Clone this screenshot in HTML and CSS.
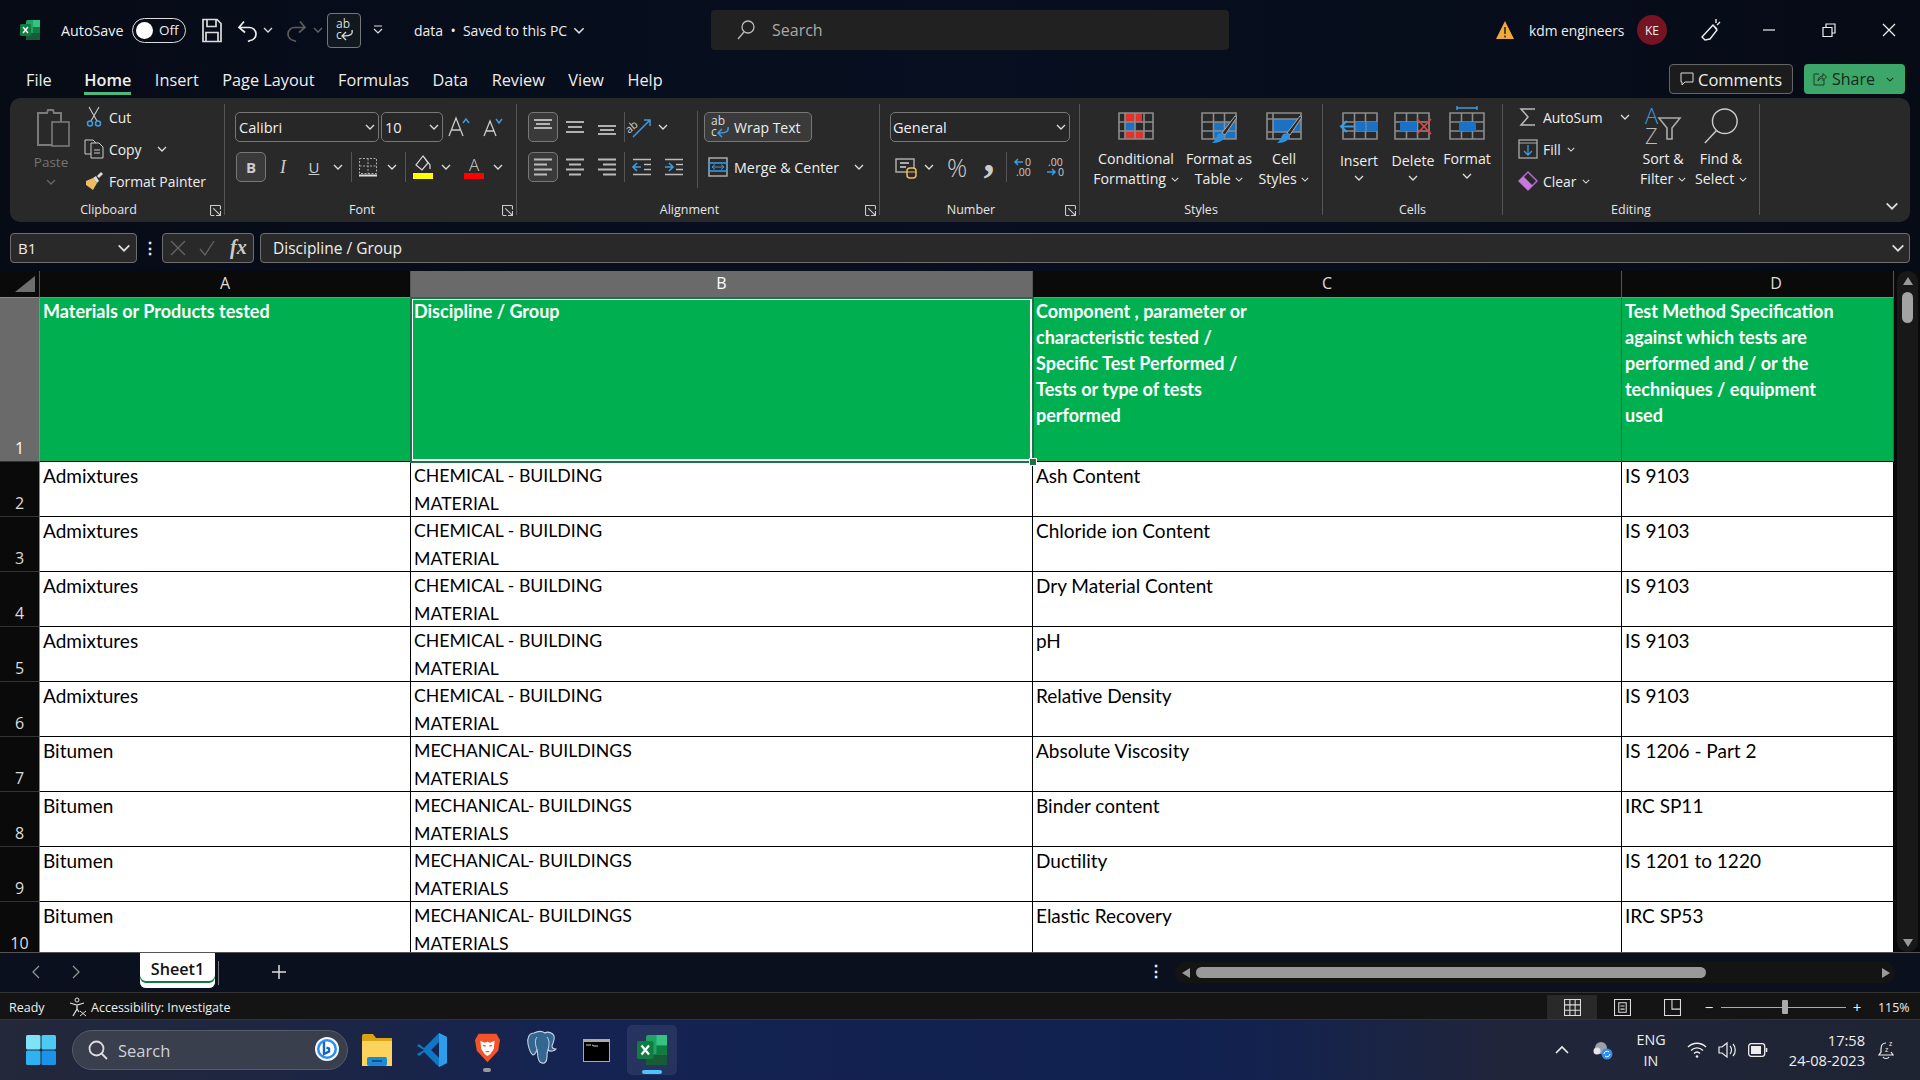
FILE: index.html
```html
<!DOCTYPE html>
<html lang="en">
<head>
<meta charset="utf-8">
<title>data - Excel</title>
<link rel="stylesheet" href="styles.css">
</head>
<body>
<svg class="defs" aria-hidden="true">
  <symbol id="chev" viewBox="0 0 10 6"><path d="M1 1l4 4 4-4" fill="none" stroke="currentColor" stroke-width="1.3"/></symbol>
  <symbol id="launch" viewBox="0 0 10 10"><path d="M.5 9V.5H9M.5 9.5H4M9.5 .5V4M3 3l6 6M9.5 5.5v4h-4" fill="none" stroke="#ccc"/></symbol>
  <symbol id="excel" viewBox="0 0 20 20"><rect x="6" width="14" height="20" rx="1.5" fill="#21a366"/><rect x="13" width="7" height="7" fill="#33c481"/><rect x="6" y="13" width="14" height="7" fill="#185c37"/><rect x="13" y="7" width="7" height="6" fill="#107c41"/><rect y="4" width="11" height="12" rx="1.2" fill="#107c41"/><path d="M3 7l5 6M8 7l-5 6" stroke="#fff" stroke-width="1.5"/></symbol>
  <symbol id="grid" viewBox="0 0 36 28"><path d="M1 1h34v26H1zM12.500 1v26M23.500 1v26M1 10h34M1 19h34" fill="none" stroke="#8c8c8c" stroke-width="1.6"/></symbol>
  <symbol id="al-top" viewBox="0 0 22 22"><path d="M2 4h18M4 8h14M2 12h18" stroke="#ddd" stroke-width="1.4"/></symbol>
  <symbol id="al-mid" viewBox="0 0 22 22"><path d="M2 6h18M4 11h14M2 16h18" stroke="#ddd" stroke-width="1.4"/></symbol>
  <symbol id="al-bot" viewBox="0 0 22 22"><path d="M2 10h18M4 14h14M2 18h18" stroke="#ddd" stroke-width="1.4"/></symbol>
  <symbol id="h-left" viewBox="0 0 22 22"><path d="M2 3.500h18M2 8.500h13M2 13.500h18M2 18.500h13" stroke="#bbb" stroke-width="1.8"/></symbol>
  <symbol id="h-center" viewBox="0 0 22 22"><path d="M2 3.500h18M5 8.500h12M2 13.500h18M5 18.500h12" stroke="#bbb" stroke-width="1.8"/></symbol>
  <symbol id="h-right" viewBox="0 0 22 22"><path d="M2 3.500h18M7 8.500h13M2 13.500h18M7 18.500h13" stroke="#bbb" stroke-width="1.8"/></symbol>
  <symbol id="brush" viewBox="0 0 36 28"><path d="M24 20L36 2l-2-1-13 17z" fill="#292929" stroke="#aaa"/><path d="M17 19c5-2 8 0 6 4-2 4-7 5-12 5 3-2 4-6 6-9z" fill="#2f8fdc"/></symbol>
</svg>

<header class="titlebar">
  <svg class="logo"><use href="#excel"/></svg>
  <span class="autosave">AutoSave</span>
  <span class="toggle"><i class="knob"></i><b class="off">Off</b></span>
  <svg class="qa save" viewBox="0 0 20 24"><path d="M1 1h14l4 4v18H1zM5 1v7h9V1M4 23v-9h12v9" fill="none" stroke="#ddd" stroke-width="1.7"/></svg>
  <svg class="qa undo" viewBox="0 0 20 24"><path d="M2 9h10a6.500 6.500 0 0 1 1 13l-2 1M7 3L2 9l6 5" fill="none" stroke="#eee" stroke-width="1.7"/></svg>
  <svg class="tiny c1"><use href="#chev"/></svg>
  <svg class="qa redo" viewBox="0 0 20 24"><path d="M18 9H8a6.500 6.500 0 0 0-1 13l2 1M13 3l5 6-6 5" fill="none" stroke="#5c5c5c" stroke-width="1.7"/></svg>
  <svg class="tiny c2 dim"><use href="#chev"/></svg>
  <span class="abbox"><svg class="wrapic white" viewBox="0 0 18 22"><text x="1" y="9" class="abt">ab</text><text x="1" y="20" class="abt">c</text><path d="M17 11c1 4-1 6-9 6M11 13l-4 4 4 4" fill="none" stroke="currentColor" stroke-width="1.300"/></svg></span>
  <svg class="more" viewBox="0 0 10 10"><path d="M1 1h8M1 4l4 4 4-4" fill="none" stroke="#ddd" stroke-width="1.2"/></svg>
  <span class="docname">data &nbsp;•&nbsp; Saved to this PC</span>
  <svg class="tiny docchev"><use href="#chev"/></svg>
  <div class="searchbox">
    <svg class="searchic" viewBox="0 0 18 20"><circle cx="11" cy="7" r="6" fill="none" stroke="#bbb" stroke-width="1.3"/><path d="M7 12l-6 7" stroke="#bbb" stroke-width="1.3"/></svg>
    <span>Search</span>
  </div>
  <div class="title-right">
    <svg class="warn" viewBox="0 0 20 20"><path d="M10 1l9 18H1z" fill="#f2a93b"/><path d="M10 7v7M10 15.500v2" stroke="#222" stroke-width="1.5"/></svg>
    <span class="user">kdm engineers</span>
    <span class="avatar">KE</span>
    <svg class="pen" viewBox="0 0 22 24"><path d="M14 7L3 19l3 3 5-1 7-9zM15 8l3 3M17 1v4M21 4l-3 3" fill="none" stroke="#eee" stroke-width="1.4"/></svg>
    <svg class="win win-min" viewBox="0 0 14 14"><path d="M1 7h12" stroke="#eee" stroke-width="1.2"/></svg>
    <svg class="win win-max" viewBox="0 0 14 14"><path d="M1 4.500h9v9H1zM4 4V1h9v9h-3" fill="none" stroke="#eee" stroke-width="1.2"/></svg>
    <svg class="win win-x" viewBox="0 0 14 14"><path d="M1 1l12 12M13 1L1 13" stroke="#eee" stroke-width="1.3"/></svg>
  </div>
</header>

<nav class="tabs">
  <div class="tablist">
    <span>File</span><span class="active">Home</span><span>Insert</span><span>Page Layout</span><span>Formulas</span><span>Data</span><span>Review</span><span>View</span><span>Help</span>
  </div>
  <div class="tabactions">
    <span class="comments"><svg class="cmt" viewBox="0 0 14 14"><path d="M1 1h12v9H5l-3 3v-3H1z" fill="none" stroke="#ddd"/></svg>Comments</span>
    <span class="share"><svg class="shr" viewBox="0 0 14 14"><path d="M6 2H1v11h10V8M5 9c0-3 2-5 5-5V1.500L13.500 5 10 8.500V6C8 6 6 7 5 9z" fill="none" stroke="#1c3a28"/></svg>Share<svg class="tiny sharechev"><use href="#chev"/></svg></span>
  </div>
</nav>

<section class="ribbon">
  <div class="group g-clip">
    <div class="body">
      <div class="paste">
        <svg class="pasteic" viewBox="0 0 34 40"><path d="M2 5h9l1-3h5l1 3h7v32H2z" fill="none" stroke="#7a7a7a" stroke-width="2"/><rect x="16" y="14" width="17" height="24" fill="#292929" stroke="#7a7a7a" stroke-width="1.600"/></svg>
        <span class="pastelabel">Paste</span>
        <svg class="tiny dim"><use href="#chev"/></svg>
      </div>
      <div class="stack">
        <div class="sm"><span class="smic"><svg class="s20" viewBox="0 0 20 20"><path d="M5 0l8 14M15 0L7 14" stroke="#ccc" stroke-width="1.100"/><circle cx="6" cy="16.500" r="2.500" fill="none" stroke="#3f9be0" stroke-width="1.500"/><circle cx="14" cy="16.500" r="2.500" fill="none" stroke="#3f9be0" stroke-width="1.500"/></svg></span><span>Cut</span></div>
        <div class="sm"><span class="smic"><svg class="s20" viewBox="0 0 20 20"><path d="M7 15H1V1h8l3 3" fill="none" stroke="#ccc"/><path d="M7 4h8l4 4v11H7zM10 11h6M10 14h6" fill="none" stroke="#ccc"/></svg></span><span>Copy</span><svg class="tiny copychev"><use href="#chev"/></svg></div>
        <div class="sm"><span class="smic"><svg class="s20" viewBox="0 0 20 20"><path d="M2 10l7-3 4 5-4 7-7-5z" fill="#eebc62"/><path d="M9 7l4 5 2-2-3-5zM13 5l4-4 2 2-4 4" fill="#ddd"/></svg></span><span>Format Painter</span></div>
      </div>
    </div>
    <div class="labelrow"><span class="label">Clipboard</span><svg class="launch"><use href="#launch"/></svg></div>
  </div>

  <div class="group g-font">
    <div class="body col">
      <div class="row">
        <span class="combo w144"><span class="caret-text">Calibri</span><svg class="tiny"><use href="#chev"/></svg></span>
        <span class="combo w62"><span class="caret-text">10</span><svg class="tiny"><use href="#chev"/></svg></span>
        <span class="t w32 bigA"><svg class="s24" viewBox="0 0 24 24"><path d="M2 21L9 3l7 18M5 15h8" fill="none" stroke="#ccc" stroke-width="1.300"/><path d="M16 8l3-4 3 4" fill="none" stroke="#3f9be0" stroke-width="1.500"/></svg></span>
        <span class="t w34 midA"><svg class="s24" viewBox="0 0 24 24"><path d="M4 21l6-15 6 15M6.500 16h7" fill="none" stroke="#ccc" stroke-width="1.300"/><path d="M16 4l3 4 3-4" fill="none" stroke="#3f9be0" stroke-width="1.500"/></svg></span>
      </div>
      <div class="row nudged">
        <span class="t w30 toggled boldb">B</span>
        <span class="t w34 italic">I</span>
        <span class="t w28 under">U</span>
        <span class="t w20"><svg class="tiny"><use href="#chev"/></svg></span>
        <span class="t w6"><i class="vsep"></i></span>
        <span class="t w28"><svg class="s20" viewBox="0 0 20 20"><path d="M1.500 1.500h17v15h-17zM10 1.500v15M1.500 9h17" fill="none" stroke="#aaa" stroke-dasharray="2 1.500"/><path d="M1 18.500h18" stroke="#ddd" stroke-width="2"/></svg></span>
        <span class="t w20"><svg class="tiny"><use href="#chev"/></svg></span>
        <span class="t w6"><i class="vsep"></i></span>
        <span class="t w30"><svg class="s20b" viewBox="0 0 20 24"><path d="M10 1l-7 9 6 5 6-7zM11 2l6 8v4" fill="none" stroke="#ddd" stroke-width="1.200"/><rect y="18" width="20" height="6" fill="#ff0"/></svg></span>
        <span class="t w16"><svg class="tiny"><use href="#chev"/></svg></span>
        <span class="t w40 colorA">A<i class="redbar"></i></span>
        <span class="t w8"><svg class="tiny"><use href="#chev"/></svg></span>
      </div>
    </div>
    <div class="labelrow"><span class="label">Font</span><svg class="launch"><use href="#launch"/></svg></div>
  </div>

  <div class="group g-align">
    <div class="body">
      <div class="col w164 nudged">
        <div class="row">
          <span class="t w30 toggled"><svg class="s22"><use href="#al-top"/></svg></span>
          <span class="t w34"><svg class="s22"><use href="#al-mid"/></svg></span>
          <span class="t w30"><svg class="s22"><use href="#al-bot"/></svg></span>
          <span class="t w4"><i class="vsep"></i></span>
          <span class="t w28"><svg class="s22" viewBox="0 0 22 22"><path d="M4 21L20 5M15 4h6v6" fill="none" stroke="#3f9be0" stroke-width="1.500"/><text x="-3" y="14" class="abrot" transform="rotate(-40 4 12)">ab</text></svg></span>
          <span class="t w18"><svg class="tiny"><use href="#chev"/></svg></span>
        </div>
        <div class="row">
          <span class="t w30 toggled"><svg class="s22"><use href="#h-left"/></svg></span>
          <span class="t w34"><svg class="s22"><use href="#h-center"/></svg></span>
          <span class="t w30"><svg class="s22"><use href="#h-right"/></svg></span>
          <span class="t w4"><i class="vsep"></i></span>
          <span class="t w32"><svg class="s22" viewBox="0 0 22 22"><path d="M2 3.500h18M13 8.500h7M13 13.500h7M2 18.500h18" stroke="#bbb" stroke-width="1.700"/><path d="M10 11H2M6 7l-4 4 4 4" fill="none" stroke="#3f9be0" stroke-width="1.700"/></svg></span>
          <span class="t w32"><svg class="s22" viewBox="0 0 22 22"><path d="M2 3.500h18M13 8.500h7M13 13.500h7M2 18.500h18" stroke="#bbb" stroke-width="1.700"/><path d="M2 11h8M6 7l4 4-4 4" fill="none" stroke="#3f9be0" stroke-width="1.700"/></svg></span>
        </div>
      </div>
      <i class="vsep tall"></i>
      <div class="col">
        <div class="row"><span class="wrapbtn"><svg class="wrapic blu" viewBox="0 0 18 22"><text x="0" y="9" class="abt">ab</text><text x="0" y="20" class="abt">c</text><path d="M17 11c1 4-1 6-9 6M11 13l-4 4 4 4" fill="none" stroke="currentColor" stroke-width="1.500"/></svg>Wrap Text</span></div>
        <div class="row merge">
          <svg class="s20m" viewBox="0 0 20 20"><rect x="1" y="1" width="18" height="18" fill="none" stroke="#aaa" stroke-width="1.500"/><path d="M1 6h18v8H1z" fill="none" stroke="#3f9be0" stroke-width="1.500"/><path d="M4 10h12M7 7.500L4 10l3 2.500M13 7.500l3 2.500-3 2.500" fill="none" stroke="#3f9be0"/></svg>
          <span class="mergetext">Merge &amp; Center</span>
          <svg class="tiny"><use href="#chev"/></svg>
        </div>
      </div>
    </div>
    <div class="labelrow"><span class="label">Alignment</span><svg class="launch"><use href="#launch"/></svg></div>
  </div>

  <div class="group g-num">
    <div class="body col">
      <div class="row"><span class="combo w180"><span class="caret-text">General</span><svg class="tiny"><use href="#chev"/></svg></span></div>
      <div class="row nudged">
        <span class="t w30"><svg class="s22" viewBox="0 0 22 22"><rect x="1" y="3" width="18" height="13" fill="none" stroke="#aaa" stroke-width="1.500"/><path d="M5 7h9M5 11h6" stroke="#aaa" stroke-width="2"/><rect x="12" y="12" width="9" height="10" rx="3" fill="#292929" stroke="#eebc62" stroke-width="1.500"/><path d="M12 16h9" stroke="#eebc62"/></svg></span>
        <span class="t w16"><svg class="tiny"><use href="#chev"/></svg></span>
        <span class="t w40 pct">%</span>
        <span class="t w24 comma">,</span>
        <span class="t w10"><i class="vsep"></i></span>
        <span class="t w26"><svg class="s22" viewBox="0 0 22 22"><path d="M10 6H2M5 3L2 6l3 3" fill="none" stroke="#3f9be0" stroke-width="1.500"/><text x="12" y="10" class="dec">0</text><text x="3" y="20" class="dec">.00</text></svg></span>
        <span class="t w38"><svg class="s22" viewBox="0 0 22 22"><text x="3" y="10" class="dec">.00</text><path d="M2 16h8M7 13l3 3-3 3" fill="none" stroke="#3f9be0" stroke-width="1.500"/><text x="13" y="20" class="dec">0</text></svg></span>
      </div>
    </div>
    <div class="labelrow"><span class="label">Number</span><svg class="launch"><use href="#launch"/></svg></div>
  </div>

  <div class="group g-styles">
    <div class="body">
      <div class="large w92">
        <svg class="lgic" viewBox="0 0 36 28"><rect x="7" y="1" width="17" height="9" fill="#e3312c"/><rect x="7" y="10" width="10" height="9" fill="#1b72c4"/><rect x="7" y="19" width="19" height="8" fill="#e3312c"/><path d="M1 1h34v26H1zM7 1v26M17 1v26M26 1v26M1 10h34M1 19h34" fill="none" stroke="#8c8c8c" stroke-width="1.600"/></svg>
        <span class="lgtext">Conditional<br>Formatting <svg class="tiny inl"><use href="#chev"/></svg></span>
      </div>
      <div class="large w74">
        <svg class="lgic" viewBox="0 0 36 28"><rect x="12" y="10" width="23" height="17" fill="#1b72c4"/><use href="#grid" width="36" height="28"/><use href="#brush" width="36" height="28" y="3"/></svg>
        <span class="lgtext">Format as<br>Table <svg class="tiny inl"><use href="#chev"/></svg></span>
      </div>
      <div class="large w56">
        <svg class="lgic" viewBox="0 0 36 28"><rect x="7" y="7" width="28" height="13" fill="#1b72c4"/><path d="M1 1h34v26H1zM7 1v26M1 7h34M1 20h34M23 20v7" fill="none" stroke="#8c8c8c" stroke-width="1.600"/><use href="#brush" width="36" height="28" y="3"/></svg>
        <span class="lgtext">Cell<br>Styles <svg class="tiny inl"><use href="#chev"/></svg></span>
      </div>
    </div>
    <div class="labelrow"><span class="label">Styles</span></div>
  </div>

  <div class="group g-cells">
    <div class="body">
      <div class="large w54 low">
        <svg class="lgic wide" viewBox="0 0 38 28"><use href="#grid" x="2" width="36" height="28"/><rect x="15" y="10" width="23" height="9" fill="#1b72c4"/><path d="M15 10v9M26 10v9" stroke="#8c8c8c"/><path d="M14 14.500H2M7 9l-6 5.500L7 20" fill="none" stroke="#3f9be0" stroke-width="2"/></svg>
        <span class="lgtext">Insert<br><svg class="tiny"><use href="#chev"/></svg></span>
      </div>
      <div class="large w54 low">
        <svg class="lgic wide" viewBox="0 0 38 28"><use href="#grid" width="36" height="28"/><rect x="6" y="10" width="17" height="9" fill="#1b72c4"/><path d="M23 7l14 15M37 7L23 22" stroke="#e3443c" stroke-width="1.800"/></svg>
        <span class="lgtext">Delete<br><svg class="tiny"><use href="#chev"/></svg></span>
      </div>
      <div class="large w54">
        <svg class="lgic bar" viewBox="0 0 36 34"><path d="M8 2h20M8 0v4M28 0v4" stroke="#3f9be0" stroke-width="1.400"/><use href="#grid" y="6" width="36" height="28"/><rect x="10" y="16" width="17" height="9" fill="#1b72c4"/></svg>
        <span class="lgtext">Format<br><svg class="tiny"><use href="#chev"/></svg></span>
      </div>
    </div>
    <div class="labelrow"><span class="label">Cells</span></div>
  </div>

  <div class="group g-edit">
    <div class="body">
      <div class="stack w124">
        <div class="sm"><span class="smic"><svg class="s20" viewBox="0 0 20 20"><path d="M17 2H3l7 8-7 8h14" fill="none" stroke="#bbb" stroke-width="1.500"/></svg></span><span>AutoSum</span><svg class="tiny autochev"><use href="#chev"/></svg></div>
        <div class="sm"><span class="smic"><svg class="s20" viewBox="0 0 20 20"><rect x="1" y="1" width="18" height="18" fill="none" stroke="#aaa" stroke-width="1.300"/><path d="M1 4h18" stroke="#aaa"/><path d="M10 6v10M6 12l4 4 4-4" fill="none" stroke="#3f9be0" stroke-width="1.300"/></svg></span><span>Fill</span><svg class="tiny fillchev"><use href="#chev"/></svg></div>
        <div class="sm"><span class="smic"><svg class="s20" viewBox="0 0 20 20"><path d="M10 1l9 9-9 9-9-9z" fill="none" stroke="#b566d0" stroke-width="1.500"/><path d="M5.500 5.500l9 9-4.500 4.500-9-9z" fill="#c47ada"/></svg></span><span>Clear</span><svg class="tiny fillchev"><use href="#chev"/></svg></div>
      </div>
      <div class="large w48">
        <svg class="lgic find" viewBox="0 0 36 36"><text x="0" y="16" class="az blu-fill">A</text><text x="0" y="36" class="az">Z</text><path d="M14 10h21l-8 10v11h-5V20z" fill="none" stroke="#aaa" stroke-width="1.600"/></svg>
        <span class="lgtext nowrap">Sort &amp;<br>Filter <svg class="tiny inl"><use href="#chev"/></svg></span>
      </div>
      <div class="large w68">
        <svg class="lgic find" viewBox="0 0 38 38"><circle cx="23" cy="14" r="13" fill="none" stroke="#ccc" stroke-width="1.500"/><path d="M14 24L2 37" stroke="#ccc" stroke-width="1.500"/></svg>
        <span class="lgtext nowrap">Find &amp;<br>Select <svg class="tiny inl"><use href="#chev"/></svg></span>
      </div>
    </div>
    <div class="labelrow"><span class="label">Editing</span></div>
  </div>

  <div class="collapse"><svg class="collapsechev"><use href="#chev"/></svg></div>
</section>

<section class="formulabar">
  <div class="namebox"><span>B1</span><svg class="tiny big"><use href="#chev"/></svg></div>
  <span class="dots">⋮</span>
  <div class="fxbox">
    <svg class="fxic" viewBox="0 0 16 16"><path d="M1 1l14 14M15 1L1 15" stroke="#666" stroke-width="1.300"/></svg>
    <svg class="fxic" viewBox="0 0 16 16"><path d="M1 9l5 6L15 1" fill="none" stroke="#666" stroke-width="1.300"/></svg>
    <span class="fx">fx</span>
  </div>
  <div class="fxinput"><span>Discipline / Group</span><svg class="tiny big"><use href="#chev"/></svg></div>
</section>

<main class="sheet">
  <div class="grid">
    <div class="corner"><svg class="cornertri" viewBox="0 0 20 16"><path d="M20 0v16H0z" fill="#6e6e6e"/></svg></div>
    <div class="ch">A</div><div class="ch sel">B</div><div class="ch">C</div><div class="ch chd">D</div>

    <div class="rh sel">1</div>
    <div class="hd">Materials or Products tested</div>
    <div class="hd active-cell">Discipline / Group<i class="handle"></i></div>
    <div class="hd">Component , parameter or<br>characteristic tested /<br>Specific Test Performed /<br>Tests or type of tests<br>performed</div>
    <div class="hd">Test Method Specification<br>against which tests are<br>performed and / or the<br>techniques / equipment<br>used</div>

    <div class="rh">2</div><div class="td">Admixtures</div><div class="td caps">CHEMICAL - BUILDING<br>MATERIAL</div><div class="td">Ash Content</div><div class="td">IS 9103</div>
    <div class="rh">3</div><div class="td">Admixtures</div><div class="td caps">CHEMICAL - BUILDING<br>MATERIAL</div><div class="td">Chloride ion Content</div><div class="td">IS 9103</div>
    <div class="rh">4</div><div class="td">Admixtures</div><div class="td caps">CHEMICAL - BUILDING<br>MATERIAL</div><div class="td">Dry Material Content</div><div class="td">IS 9103</div>
    <div class="rh">5</div><div class="td">Admixtures</div><div class="td caps">CHEMICAL - BUILDING<br>MATERIAL</div><div class="td">pH</div><div class="td">IS 9103</div>
    <div class="rh">6</div><div class="td">Admixtures</div><div class="td caps">CHEMICAL - BUILDING<br>MATERIAL</div><div class="td">Relative Density</div><div class="td">IS 9103</div>
    <div class="rh">7</div><div class="td">Bitumen</div><div class="td caps">MECHANICAL- BUILDINGS<br>MATERIALS</div><div class="td">Absolute Viscosity</div><div class="td">IS 1206 - Part 2</div>
    <div class="rh">8</div><div class="td">Bitumen</div><div class="td caps">MECHANICAL- BUILDINGS<br>MATERIALS</div><div class="td">Binder content</div><div class="td">IRC SP11</div>
    <div class="rh">9</div><div class="td">Bitumen</div><div class="td caps">MECHANICAL- BUILDINGS<br>MATERIALS</div><div class="td">Ductility</div><div class="td">IS 1201 to 1220</div>
    <div class="rh">10</div><div class="td">Bitumen</div><div class="td caps">MECHANICAL- BUILDINGS<br>MATERIALS</div><div class="td">Elastic Recovery</div><div class="td">IRC SP53</div>
  </div>
  <div class="vscroll">
    <i class="arrow-up"></i>
    <i class="vthumb"></i>
    <i class="arrow-down"></i>
  </div>
</main>

<section class="sheettabs">
  <svg class="navchev" viewBox="0 0 8 14"><path d="M7 1L1 7l6 6" fill="none" stroke="#999" stroke-width="1.200"/></svg>
  <svg class="navchev next" viewBox="0 0 8 14"><path d="M1 1l6 6-6 6" fill="none" stroke="#999" stroke-width="1.200"/></svg>
  <div class="sheettab">Sheet1</div>
  <i class="tabsep"></i>
  <svg class="plus" viewBox="0 0 14 14"><path d="M7 0v14M0 7h14" stroke="#ddd" stroke-width="1.500"/></svg>
  <span class="hdots">⋮</span>
  <div class="hscroll"><i class="arrow-left"></i><i class="hthumb"></i><i class="arrow-right"></i></div>
</section>

<footer class="statusbar">
  <span class="ready">Ready</span>
  <svg class="acc" viewBox="0 0 18 20"><circle cx="8" cy="3" r="2" fill="none" stroke="#ddd"/><path d="M1 6l7 2 7-2M8 8v4l-4 7M8 12l2 3" fill="none" stroke="#ddd" stroke-width="1.300"/><path d="M11 14l6 5M17 14l-6 5" stroke="#ddd"/></svg>
  <span class="acctext">Accessibility: Investigate</span>
  <div class="statusright">
    <span class="viewbtn on"><svg class="s18" viewBox="0 0 16 16"><path d="M.5.500h15v15H.5zM5.500.500v15M10.500.500v15M.5 5.500h15M.5 10.500h15" fill="none" stroke="#ddd"/></svg></span>
    <span class="viewbtn"><svg class="s18" viewBox="0 0 16 16"><path d="M.5.500h15v15H.5z" fill="none" stroke="#ddd"/><path d="M4.500 3.500h7v9h-7zM6 6.500h4M6 9.500h4" fill="none" stroke="#ddd"/></svg></span>
    <span class="viewbtn"><svg class="s18" viewBox="0 0 16 16"><path d="M.5.500h15v15H.5zM7.500.500v9h8" fill="none" stroke="#ddd"/></svg></span>
    <span class="zm minus">−</span>
    <span class="slider"><i class="sthumb"></i></span>
    <span class="zm plusz">+</span>
    <span class="zoomv">115%</span>
  </div>
</footer>

<footer class="taskbar">
  <svg class="winlogo" viewBox="0 0 30 30"><rect width="14.500" height="14.500" rx="1.500" fill="#7fe3f7"/><rect x="15.500" width="14.500" height="14.500" rx="1.500" fill="#4ccaf2"/><rect y="15.500" width="14.500" height="14.500" rx="1.500" fill="#2fb2ef"/><rect x="15.500" y="15.500" width="14.500" height="14.500" rx="1.500" fill="#1a93e8"/></svg>
  <div class="tsearch">
    <svg class="tsic" viewBox="0 0 20 20"><circle cx="8.500" cy="8.500" r="7" fill="none" stroke="#ddd" stroke-width="1.800"/><path d="M13.500 13.500L19 19" stroke="#ddd" stroke-width="1.800"/></svg>
    <span>Search</span>
    <svg class="bing" viewBox="0 0 26 26"><circle cx="13" cy="12" r="12" fill="#f4f8ff"/><circle cx="13" cy="12" r="10" fill="#2d8fe8"/><circle cx="13" cy="12" r="7.500" fill="#fff"/><path d="M10 5v12l5-2.500 0-3-2.500-1" fill="none" stroke="#1464c8" stroke-width="2.400"/></svg>
  </div>
  <svg class="tb tb-folder" viewBox="0 0 30 34"><path d="M0 3a2 2 0 0 1 2-2h9l3 4h16v4H0z" fill="#d9a514"/><path d="M0 8h30v25H0z" fill="#fcd35c"/><rect x="5" y="24" width="20" height="9" rx="2" fill="#1a8ad8"/><rect x="10" y="27" width="10" height="2" fill="#0a4e94"/></svg>
  <svg class="tb tb-code" viewBox="0 0 30 34"><path d="M22 0l8 4v26l-8 4L7 19l-5 4-2-2 7-4-7-4 2-2 5 4z" fill="#0f78c6"/><path d="M22 0l8 4v26l-8 4zM22 9l-8 8 8 8z" fill="#2a9eea"/><path d="M14 17l8-8v16z" fill="#1a2450"/></svg>
  <span class="tbwrap">
    <svg class="tb-brave" viewBox="0 0 28 34"><path d="M4 1h20l4 7-2 12-12 13L2 20 0 8z" fill="#f4532a"/><path d="M6 9l5 2 3-1 3 1 5-2-1 9-4 6-3 2-3-2-4-6z" fill="#fff"/><path d="M9 14l3 1M19 14l-3 1M12 21h4" stroke="#f4532a" stroke-width="1.500"/></svg>
    <i class="pin grey"></i>
  </span>
  <svg class="tb tb-pg" viewBox="0 0 30 36"><path d="M7 1C2 1 0 6 1 12c1 5 3 10 5 11 2 0 3-3 4-5 1 3 0 9 3 12 4 3 7 0 7-5 0-3 0-5 1-7 2 2 7 1 8-1-2 0-4-1-4-3 1-3 3-7 2-10-1-3-6-5-9-3-3-2-7-2-11 0z" fill="#336791" stroke="#c7d4e2" stroke-width="1.100"/><path d="M10 5c-3 4-1 9 0 13M20 5c3 4 2 8 1 13" fill="none" stroke="#c7d4e2"/></svg>
  <svg class="tb tb-term" viewBox="0 0 27 23"><rect width="27" height="23" fill="#aaa"/><rect x="1" y="3" width="25" height="19" fill="#000"/><path d="M3 6h5M9 6l2 1h4" stroke="#ccc"/></svg>
  <span class="tbactive">
    <svg class="tb-excel" viewBox="0 0 20 20"><use href="#excel"/></svg>
    <i class="pin blue"></i>
  </span>
  <div class="tray">
    <svg class="tr tr-up" viewBox="0 0 14 8"><path d="M1 7l6-6 6 6" fill="none" stroke="#eee" stroke-width="1.600"/></svg>
    <svg class="tr tr-cloud" viewBox="0 0 20 20"><circle cx="8" cy="8" r="6" fill="#9aa0ac"/><circle cx="4" cy="11" r="3.500" fill="#e5e5e5"/><circle cx="14" cy="14" r="5.500" fill="#2d8fe8"/><path d="M11 14a3 3 0 0 1 5-2M17 14a3 3 0 0 1-5 2" fill="none" stroke="#fff"/></svg>
    <span class="lang">ENG<br>IN</span>
    <svg class="tr tr-wifi" viewBox="0 0 20 16"><path d="M1 5c5-5 13-5 18 0M4 8.500c3.500-3.500 8.500-3.500 12 0M7 11.500c2-2 4-2 6 0" fill="none" stroke="#eee" stroke-width="1.400"/><circle cx="10" cy="14.500" r="1.300" fill="#eee"/></svg>
    <svg class="tr tr-vol" viewBox="0 0 20 18"><path d="M1 6h3l5-4v14l-5-4H1z" fill="none" stroke="#eee" stroke-width="1.200"/><path d="M12 5c2 2 2 6 0 8M15 3c3 3 3 9 0 12" fill="none" stroke="#eee" stroke-width="1.200"/></svg>
    <svg class="tr tr-bat" viewBox="0 0 20 14"><rect x=".7" y=".7" width="16" height="12.600" rx="2.500" fill="none" stroke="#eee" stroke-width="1.300"/><rect x="3" y="3" width="10" height="8" fill="#eee"/><path d="M18.500 5v4" stroke="#eee" stroke-width="1.600"/></svg>
    <span class="clock">17:58<br>24-08-2023</span>
    <svg class="tr tr-bell" viewBox="0 0 18 20"><path d="M9 3c-4 0-5 3-5 6v3l-2 3h14l-2-3M6 17c1 2 5 2 6 0" fill="none" stroke="#eee" stroke-width="1.200"/><text x="8" y="12" class="zz">z</text><text x="12" y="6" class="zz">z</text></svg>
  </div>
</footer>
</body>
</html>
```
FILE: styles.css
```css
* { box-sizing: border-box; }
html, body { margin: 0; height: 100%; }
body {
  width: 1920px; height: 1080px; overflow: hidden; position: relative;
  display: flex; flex-direction: column;
  background: linear-gradient(90deg, #060b16, #070f20 50%, #060b16);
  color: #eee;
  font-family: "Open Sans", "Noto Sans", sans-serif;
  font-size: 14.2px;
}
.defs { width: 0; height: 0; position: absolute; }
svg { display: block; flex: none; overflow: visible; }
i { display: block; }
em { font-style: normal; }
.blu { color: #3f9be0; }
.white { color: #ddd; }
.tiny { width: 10px; height: 6px; color: #ddd; }
.tiny.big { width: 14px; height: 8px; }
.tiny.dim { color: #666; }
.tiny.inl { display: inline-block; vertical-align: 2px; margin-left: 1px; width: 8px; height: 5px; }
.s20 { width: 20px; height: 20px; }
.s20b { width: 20px; height: 24px; }
.s20m { width: 20px; height: 20px; margin: 0 6px 0 4px; }
.s22 { width: 22px; height: 22px; }
.s24 { width: 24px; height: 24px; }
.s18 { width: 17px; height: 17px; }

/* title bar */
.titlebar { height: 60px; display: flex; align-items: center; padding-left: 20px; flex: none; }
.logo { width: 20px; height: 20px; }
.autosave { margin-left: 21px; width: 64px; font-size: 14.300px; white-space: nowrap; color: #f0f0f0; }
.toggle { margin-left: 7px; width: 54px; height: 25px; border: 1.5px solid #ddd; border-radius: 13px; display: flex; align-items: center; padding-left: 3px; }
.knob { width: 17px; height: 17px; border-radius: 50%; background: #fff; }
.off { font-weight: 400; font-size: 13.500px; margin-left: 6px; }
.qa { width: 20px; height: 25px; }
.save { margin-left: 16px; }
.undo { margin-left: 15px; }
.c1 { margin-left: 6px; }
.redo { margin-left: 14px; }
.c2 { margin-left: 6px; }
.abbox { margin-left: 4px; width: 34px; height: 35px; border: 1px solid #777; border-radius: 4px; background: #111820; display: flex; align-items: center; justify-content: center; }
.wrapic { width: 18px; height: 22px; }
.abt { font-size: 12px; fill: #ddd; font-family: "Open Sans", sans-serif; }
.more { margin-left: 12px; width: 10px; height: 10px; }
.docname { margin-left: 31px; width: 159px; white-space: nowrap; font-size: 14px; }
.docchev { margin-left: 0; width: 12px; height: 7px; }
.searchbox { margin-left: 126px; width: 518px; height: 40px; background: #212121; border-radius: 4px; display: flex; align-items: center; padding-left: 26px; color: #a9a9a9; font-size: 16px; }
.searchic { width: 18px; height: 20px; margin-right: 17px; }
.title-right { display: flex; align-items: center; flex: 1; padding-left: 266px; }
.warn { width: 20px; height: 20px; }
.user { margin-left: 14px; width: 98px; font-size: 13.800px; white-space: nowrap; }
.avatar { margin-left: 10px; width: 30px; height: 30px; border-radius: 50%; background: #761423; display: flex; align-items: center; justify-content: center; font-size: 12px; }
.pen { margin-left: 32px; width: 22px; height: 24px; }
.win { width: 14px; height: 14px; }
.win-min { margin-left: 41px; }
.win-max { margin-left: 46px; }
.win-x { margin-left: 46px; }

/* tabs */
.tabs { height: 38px; flex: none; display: flex; justify-content: space-between; padding: 0 15px 0 26px; }
.tablist { display: flex; gap: 23.500px; font-size: 16.300px; height: 38px; }
.tablist span { padding-top: 9px; white-space: nowrap; line-height: 22px; border-bottom: 3px solid transparent; box-sizing: content-box; height: 23px; }
.tablist span:first-child { margin-right: 9px; }
.tablist .active { font-weight: 600; border-bottom-color: #4db87a; }
.tabactions { display: flex; gap: 11px; padding-top: 4px; }
.comments { width: 124px; height: 30px; border: 1px solid #666; border-radius: 4px; background: #1c1c1c; display: flex; align-items: center; justify-content: center; gap: 4px; font-size: 16.500px; }
.cmt { width: 14px; height: 14px; }
.share { width: 101px; height: 30px; border-radius: 4px; background: #3ca768; color: #14281c; display: flex; align-items: center; padding-left: 9px; gap: 5px; font-size: 16px; }
.shr { width: 14px; height: 14px; }
.sharechev { color: #14281c; margin-left: 6px; width: 8px; height: 5px; }

/* ribbon */
.ribbon { flex: none; margin: 0 10px; height: 124px; background: #292929; border-radius: 10px; display: flex; padding: 6px 0 7px; }
.group { display: flex; flex-direction: column; border-right: 1px solid #555; height: 111px; }
.g-clip { width: 215px; padding-left: 27px; }
.g-font { width: 292px; padding-left: 10px; }
.g-align { width: 363px; padding-left: 10px; }
.g-num { width: 200px; padding-left: 10px; }
.g-styles { width: 243px; padding-left: 10px; }
.g-cells { width: 180px; padding-left: 9px; }
.g-edit { width: 257px; padding-left: 12px; }
.body { height: 96px; display: flex; flex: none; }
.body.col, .col { display: flex; flex-direction: column; gap: 10px; padding-top: 8px; }
.nudged { margin-left: 1px; }
.row { display: flex; height: 30px; align-items: center; flex: none; }
.labelrow { display: flex; align-items: center; flex: 1; font-size: 12.500px; padding-top: 1px; }
.label { flex: 1; text-align: center; color: #e6e6e6; }
.g-clip .labelrow { margin-left: -27px; }
.g-font .labelrow, .g-align .labelrow, .g-num .labelrow, .g-styles .labelrow { margin-left: -10px; }
.g-cells .labelrow { margin-left: -9px; }
.g-edit .labelrow { margin-left: -12px; }
.launch { width: 11px; height: 11px; margin: 2px 3px 0 3px; }

.paste { width: 38px; display: flex; flex-direction: column; align-items: center; padding-top: 4px; flex: none; }
.pasteic { width: 34px; height: 40px; margin-right: 6px; }
.pastelabel { color: #747474; margin: 4px 10px 0 0; white-space: nowrap; line-height: 20px; font-size: 13.500px; }
.paste .tiny { margin: 7px 10px 0 0; }
.stack { display: grid; grid-auto-rows: 32px; margin: -3px 0 0 7px; }
.stack.w124 { width: 124px; margin-left: 0; }
.sm { display: flex; align-items: center; white-space: nowrap; font-size: 13.900px; }
.smic { width: 24px; margin-right: 3px; display: flex; justify-content: center; flex: none; }
.w124 .smic { width: 26px; margin-right: 2px; }
.copychev { margin-left: 15px; }
.autochev { margin-left: 17px; }
.fillchev { margin-left: 6px; width: 8px; height: 5px; }

.combo { height: 30px; border: 1px solid #777; border-radius: 5px; display: flex; align-items: center; justify-content: space-between; padding: 0 3px 0 3px; font-size: 14.600px; color: #eee; flex: none; background: #272727; }
.w144 { width: 144px; margin-right: 2px; }
.w62 { width: 62px; }
.w180 { width: 180px; padding-left: 2px; }
.caret-text { white-space: nowrap; }
.t { height: 30px; display: flex; align-items: center; justify-content: center; flex: none; }
.w4 { width: 4px; } .w6 { width: 6px; } .w8 { width: 8px; } .w10 { width: 10px; } .w16 { width: 16px; }
.w18 { width: 18px; } .w20 { width: 20px; } .w24 { width: 24px; } .w26 { width: 26px; } .w28 { width: 28px; }
.w30 { width: 30px; } .w32 { width: 32px; } .w34 { width: 34px; } .w36 { width: 36px; } .w38 { width: 38px; } .w40 { width: 40px; }
.w48 { width: 48px; } .w54 { width: 54px; } .w56 { width: 56px; } .w68 { width: 68px; } .w74 { width: 74px; } .w92 { width: 92px; } .w164 { width: 164px; flex: none; }
.toggled { border: 1px solid #777; border-radius: 5px; background: #3a3a3a; }
.vsep { width: 1px; height: 30px; background: #555; }
.vsep.tall { height: 77px; margin: 7px 6px 0 5px; flex: none; }
.boldb { font-weight: 700; font-size: 15px; color: #ccc; }
.italic { font-family: "Liberation Serif", serif; font-style: italic; font-size: 18px; color: #ccc; }
.under { text-decoration: underline; font-size: 15px; color: #ccc; }
.colorA { font-size: 17px; flex-direction: column; line-height: 17px; color: #ccc; font-weight: 300; }
.redbar { width: 20px; height: 6px; background: #f00; }
.abrot { font-size: 11px; fill: #ccc; font-family: "Open Sans", sans-serif; }
.dec { font-size: 10.500px; fill: #ccc; font-family: "Open Sans", sans-serif; }
.wrapbtn { width: 108px; height: 30px; border: 1px solid #777; border-radius: 5px; background: #3a3a3a; display: flex; align-items: center; padding-left: 6px; gap: 5px; white-space: nowrap; font-size: 14px; }
.merge { width: 170px; }
.mergetext { width: 120px; white-space: nowrap; flex: none; font-size: 14.300px; }
.pct { font-size: 25px; color: #ccc; font-weight: 300; }
.comma { font-family: "Liberation Serif", serif; font-size: 44px; font-weight: 700; color: #ccc; line-height: 14px; padding-bottom: 18px; }

.large { display: flex; flex-direction: column; align-items: center; padding-top: 8px; flex: none; }
.lgic { width: 36px; height: 28px; margin-bottom: 4px; }
.lgic.wide { width: 38px; }
.lgic.bar { height: 34px; margin-top: -6px; }
.lgic.find { height: 36px; margin-top: -4px; margin-bottom: 0; }
.lgtext { margin-top: 5px; text-align: center; line-height: 20px; white-space: nowrap; }
.lgtext .tiny:not(.inl) { margin: 4px auto 0; }
.low .lgtext { margin-top: 7px; }
.az { font-size: 22px; fill: #bbb; font-family: "Open Sans", sans-serif; font-weight: 300; }
.blu-fill { fill: #3f9be0; }
.collapse { flex: 1; display: flex; align-items: flex-end; justify-content: flex-end; padding: 0 11px 5px 0; }
.collapsechev { width: 14px; height: 8px; color: #ddd; }

/* formula bar */
.formulabar { flex: none; margin: 11px 10px 9px; height: 29px; display: flex; align-items: center; }
.namebox, .fxbox, .fxinput { height: 30px; border: 1px solid #6e6e6e; border-radius: 4px; background: #292929; display: flex; align-items: center; font-size: 15.500px; }
.namebox { width: 127px; padding: 0 5px 0 7px; justify-content: space-between; font-size: 15px; }
.dots { width: 25px; text-align: center; font-size: 16px; font-weight: 700; flex: none; }
.fxbox { width: 92px; padding-left: 7px; gap: 13px; flex: none; }
.fxic { width: 16px; height: 16px; }
.fx { font-family: "Liberation Serif", serif; font-style: italic; font-size: 20px; font-weight: 700; color: #ccc; margin-left: 2px; }
.fxinput { margin-left: 6px; flex: 1; padding: 0 4px 0 12px; justify-content: space-between; }

/* sheet */
.sheet { flex: none; height: 682px; display: flex; background: #0a0a0a; border-bottom: 1px solid #555; }
.grid { width: 1894px; display: grid; grid-template-columns: 40px 371px 622px 589px 272px; grid-template-rows: 27px 164px repeat(9, 55px); overflow: hidden; flex: none; font-family: "Lato", "Open Sans", sans-serif; }
.corner { background: #0a0a0a; border-right: 1px solid #555; border-bottom: 1px solid #8a8a8a; display: flex; padding: 5px 3px 0 15px; }
.cornertri { width: 20px; height: 16px; }
.ch { background: #0a0a0a; color: #dcdcdc; font-family: "Open Sans", sans-serif; font-size: 16px; text-align: center; line-height: 24px; border-bottom: 1px solid #8a8a8a; border-right: 1px solid #555; }
.ch.sel { background: #6a6a6a; color: #fff; }
.ch.chd { padding-left: 37px; }
.rh { background: #0a0a0a; color: #dcdcdc; font-family: "Open Sans", sans-serif; font-size: 16px; display: flex; align-items: flex-end; justify-content: center; line-height: 26px; border-right: 1px solid #8a8a8a; border-bottom: 1px solid #333; }
.rh.sel { background: #6a6a6a; color: #fff; }
.hd { background: #00b050; color: #fff; font-weight: 700; font-size: 18px; line-height: 26px; padding: 0 3px; border-right: 1px solid #097a3f; border-bottom: 1px solid #000; position: relative; }
.active-cell { outline: 2px solid #1e7145; outline-offset: -1px; box-shadow: inset 0 0 0 2px #fff; z-index: 1; }
.handle { position: absolute; right: -5px; bottom: -5px; width: 8px; height: 8px; background: #1e7145; border: 1px solid #fff; z-index: 2; }
.td { background: #fff; color: #000; font-size: 19px; line-height: 28px; padding: 0 3px; border-right: 1px solid #000; border-bottom: 1px solid #000; }
.td.caps { font-size: 17.700px; }
.vscroll { flex: 1; margin-left: 3px; margin-right: 2px; background: #181818; border-radius: 10px; display: flex; flex-direction: column; align-items: center; padding-top: 6px; }
.arrow-up { width: 0; height: 0; border: 5px solid transparent; border-top: 0; border-bottom: 8px solid #999; }
.vthumb { width: 11px; height: 31px; border-radius: 6px; background: #a3a3a3; margin-top: 7px; }
.arrow-down { width: 0; height: 0; border: 5px solid transparent; border-bottom: 0; border-top: 8px solid #999; margin-top: auto; margin-bottom: 5px; }

/* sheet tabs */
.sheettabs { flex: none; height: 39px; display: flex; align-items: flex-start; padding-left: 32px; background: #0a101e; }
.navchev { width: 8px; height: 14px; margin-top: 12px; }
.navchev.next { margin-left: 32px; }
.sheettab { margin-left: 60px; width: 75px; height: 35px; background: #fff; color: #111; border-radius: 0 0 6px 6px; font-size: 16.200px; font-weight: 600; display: flex; justify-content: center; line-height: 33px; box-shadow: inset 0 -5px 0 #fff, inset 0 -7px 0 #107c41; }
.tabsep { width: 1px; height: 24px; background: #777; margin: 8px 0 0 3px; }
.plus { width: 14px; height: 14px; margin: 12px 0 0 53px; }
.hdots { margin-left: 862px; font-size: 16px; font-weight: 700; line-height: 36px; width: 14px; text-align: center; }
.hscroll { margin: 9px 0 0 13px; width: 720px; height: 21px; background: #141414; border-radius: 10px; display: flex; align-items: center; padding: 0 5px 0 7px; }
.arrow-left { width: 0; height: 0; border: 5px solid transparent; border-left: 0; border-right: 8px solid #999; }
.hthumb { width: 510px; height: 11px; border-radius: 6px; background: #999; margin-left: 6px; }
.arrow-right { width: 0; height: 0; border: 5px solid transparent; border-right: 0; border-left: 8px solid #999; margin-left: auto; }

/* status */
.statusbar { flex: none; height: 28px; background: #141414; border-top: 1px solid #333; border-bottom: 1px solid #333; display: flex; align-items: center; padding: 2px 7px 0 9px; font-size: 12.500px; }
.ready { width: 60px; }
.acc { width: 18px; height: 20px; }
.acctext { margin-left: 4px; white-space: nowrap; }
.statusright { margin-left: auto; display: flex; align-items: center; height: 24px; }
.viewbtn { width: 50px; height: 24px; display: flex; align-items: center; justify-content: center; }
.viewbtn.on { background: #292929; }
.zm { font-size: 15px; width: 24px; text-align: center; line-height: 20px; }
.slider { width: 125px; height: 1px; background: #aaa; display: flex; justify-content: flex-start; align-items: center; margin: 0 -1px 0 0; padding-left: 61px; }
.sthumb { width: 6px; height: 14px; background: #aaa; border-radius: 1px; flex: none; }
.zoomv { margin-left: 9px; width: 35px; font-size: 12.400px; }

/* taskbar */
.taskbar { flex: 1; display: flex; align-items: center; padding-left: 26px; background: linear-gradient(90deg, #23283a 0, #1f2640 12%, #142352 30%, #10204f 60%, #13224e 66%, #20253a 78%, #1f2433 100%); }
.winlogo { width: 30px; height: 30px; }
.tsearch { margin-left: 16px; width: 276px; height: 40px; background: #3a3f4e; border: 1px solid #565b68; border-radius: 20px; display: flex; align-items: center; padding-left: 15px; font-size: 16.500px; color: #cfd2d8; }
.tsic { width: 20px; height: 20px; margin-right: 10px; }
.bing { width: 26px; height: 26px; margin-left: auto; margin-right: 7px; }
.tb { width: 30px; height: 34px; }
.tb-folder { margin-left: 14px; }
.tb-code { margin-left: 25px; }
.tbwrap { margin-left: 26px; display: flex; flex-direction: column; align-items: center; width: 28px; padding-top: 4px; }
.tb-brave { width: 25px; height: 32px; }
.pin { border-radius: 2px; margin-top: 4px; height: 4px; }
.pin.grey { width: 8px; background: #999; }
.tb-pg { margin-left: 26px; height: 36px; }
.tb.tb-term { margin-left: 26px; width: 27px; height: 23px; }
.tbactive { margin-left: 17px; width: 50px; height: 50px; border-radius: 5px; background: rgba(255,255,255,.08); display: flex; flex-direction: column; align-items: center; padding-top: 12px; }
.tb-excel { width: 30px; height: 30px; margin-top: -2px; }
.tbactive .pin { width: 20px; background: #4cc2ff; margin-top: 5px; }
.tray { margin-left: auto; display: flex; align-items: center; padding-right: 25px; color: #eee; }
.tr { flex: none; }
.tr-up { width: 14px; height: 8px; }
.tr-cloud { width: 20px; height: 20px; margin-left: 24px; }
.lang { margin-left: 20px; width: 36px; text-align: center; font-size: 14.300px; line-height: 21px; }
.tr-wifi { margin-left: 18px; width: 20px; height: 16px; }
.tr-vol { margin-left: 11px; width: 20px; height: 18px; }
.tr-bat { margin-left: 10px; width: 20px; height: 14px; }
.clock { margin-left: 17px; width: 80px; text-align: right; font-size: 14.600px; line-height: 20px; white-space: nowrap; }
.tr-bell { margin-left: 12px; width: 18px; height: 20px; }
.zz { font-size: 7px; fill: #eee; font-family: "Open Sans", sans-serif; }
```
